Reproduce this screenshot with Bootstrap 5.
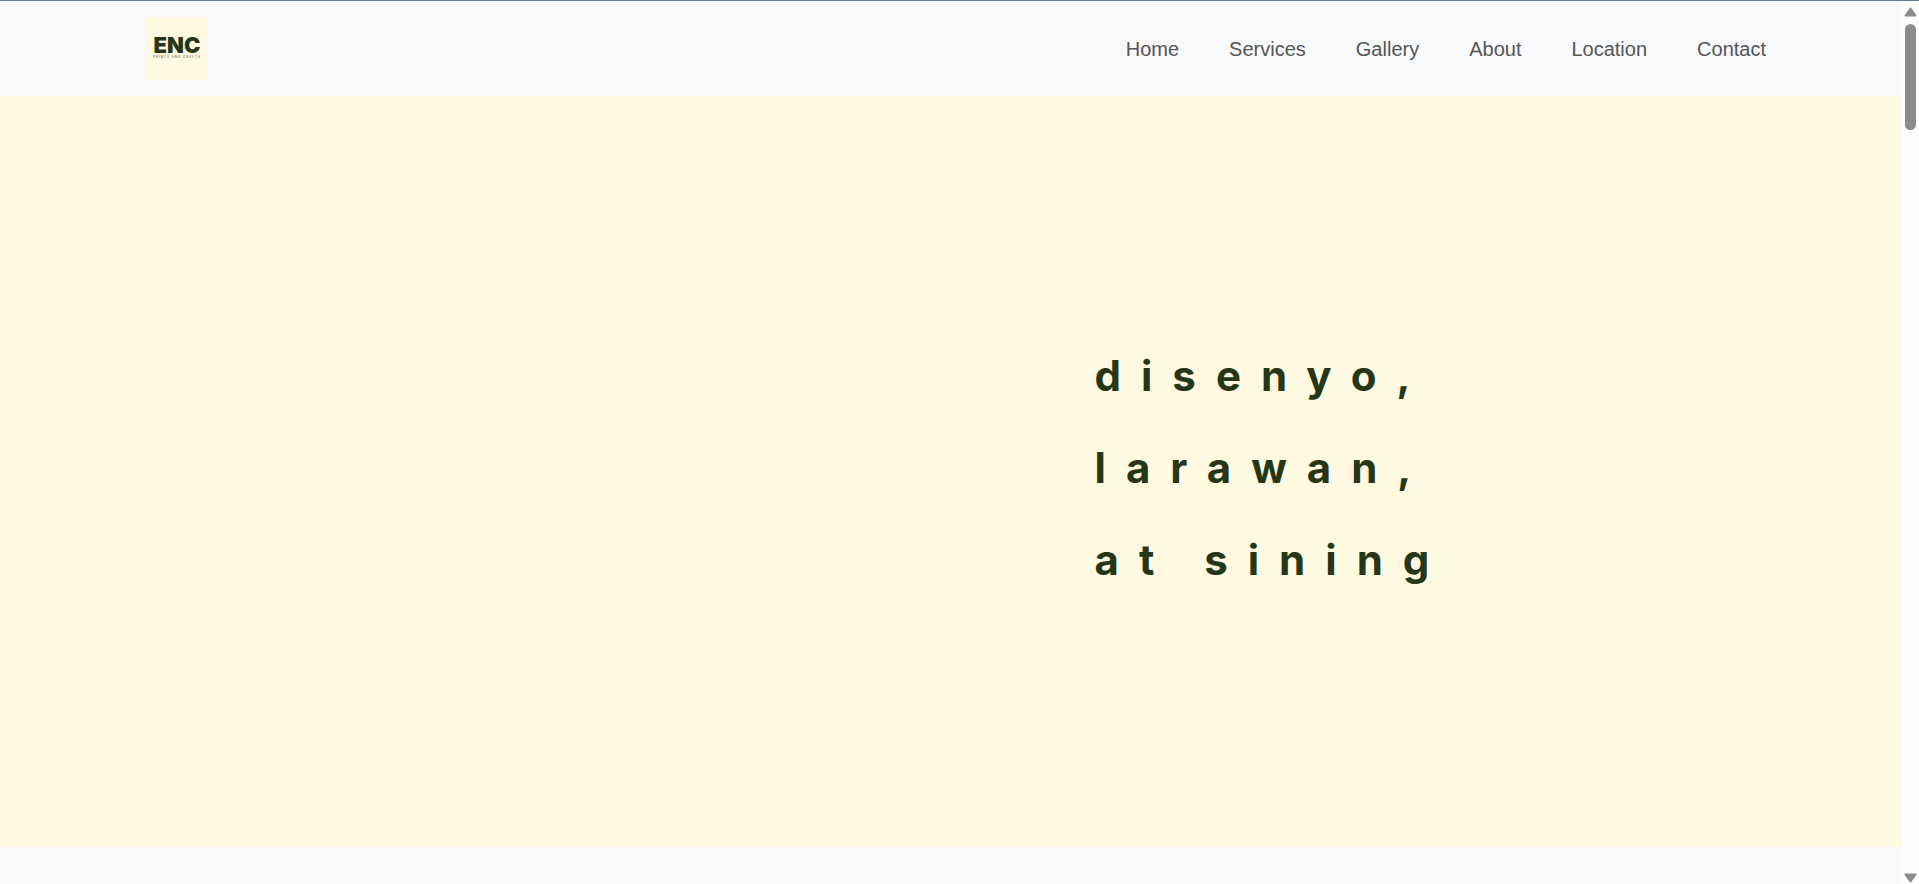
<!DOCTYPE html>
<html lang="tl">
<head>
<meta charset="utf-8">
<meta name="viewport" content="width=device-width, initial-scale=1">
<title>ENC Prints and Crafts</title>
<link href="https://cdn.jsdelivr.net/npm/bootstrap@5.3.0/dist/css/bootstrap.min.css" rel="stylesheet">
<style>
  body { background: #f8f9fb; font-family: "Liberation Sans", Arial, sans-serif; overflow: hidden; }
  .site-header { border-top: 1px solid #5b7d87; padding: 16px 135px 16px 146px; }
  .brand-tile { width: 62px; height: 63px; background: #fff9e1; color: #263718; font-family: Inter, sans-serif; }
  .menu-links { gap: 50px; }
  .menu-links a { color: #555; font-size: 20px; line-height: 30px; padding: 0; }
  .hero { background: #fff9e1; min-height: 85vh; }
  .tagline { color: #263718; font-family: Inter, sans-serif; font-weight: 700; font-size: 42px; line-height: 92px; letter-spacing: 20px; padding-left: 144px; padding-bottom: 8px; }
  .scroll-rail { width: 18px; background: #fcfcfc; border-top: 1px solid #5b7d87; padding: 6px 0 0; }
  .scroll-thumb { width: 11px; height: 12vh; margin-top: 7px; border-radius: 6px; background: #8b8b8b; }
</style>
</head>
<body>
<div class="d-flex vh-100">
  <div class="flex-grow-1 overflow-hidden">
    <header class="site-header">
      <nav class="d-flex justify-content-between align-items-center" aria-label="Main">
        <a href="#" class="brand-tile d-block" aria-label="ENC home">
          <svg class="d-block" width="62" height="63" viewBox="0 0 62 63" fill="currentColor">
            <text x="31" y="36" text-anchor="middle" font-size="22" font-weight="900">ENC</text>
            <text x="31" y="41" text-anchor="middle" font-size="3" font-weight="500" letter-spacing="1" opacity=".75">PRINTS AND CRAFTS</text>
          </svg>
        </a>
        <ul class="menu-links nav">
          <li class="nav-item"><a class="nav-link" href="#home">Home</a></li>
          <li class="nav-item"><a class="nav-link" href="#services">Services</a></li>
          <li class="nav-item"><a class="nav-link" href="#gallery">Gallery</a></li>
          <li class="nav-item"><a class="nav-link" href="#about">About</a></li>
          <li class="nav-item"><a class="nav-link" href="#location">Location</a></li>
          <li class="nav-item"><a class="nav-link" href="#contact">Contact</a></li>
        </ul>
      </nav>
    </header>
    <main id="home" class="hero d-flex align-items-center">
      <div class="row g-0 w-100">
        <div class="col-6 offset-6">
          <h1 class="tagline mb-0 text-nowrap">disenyo,<br>larawan,<br>at sining</h1>
        </div>
      </div>
    </main>
  </div>
  <div class="scroll-rail d-flex flex-column align-items-center flex-shrink-0" aria-hidden="true">
    <svg width="13" height="10" viewBox="0 0 13 10"><path d="M6.500 1.500 11.500 8.500H1.500Z" fill="#8b8b8b" stroke="#8b8b8b" stroke-width="2" stroke-linejoin="round"/></svg>
    <div class="scroll-thumb"></div>
    <svg class="mt-auto" width="13" height="11" viewBox="0 0 13 11"><path d="M6.500 8.500 11.500 1.500H1.500Z" fill="#8b8b8b" stroke="#8b8b8b" stroke-width="2" stroke-linejoin="round"/></svg>
  </div>
</div>
<script src="https://cdn.jsdelivr.net/npm/bootstrap@5.3.0/dist/js/bootstrap.bundle.min.js"></script>
</body>
</html>
